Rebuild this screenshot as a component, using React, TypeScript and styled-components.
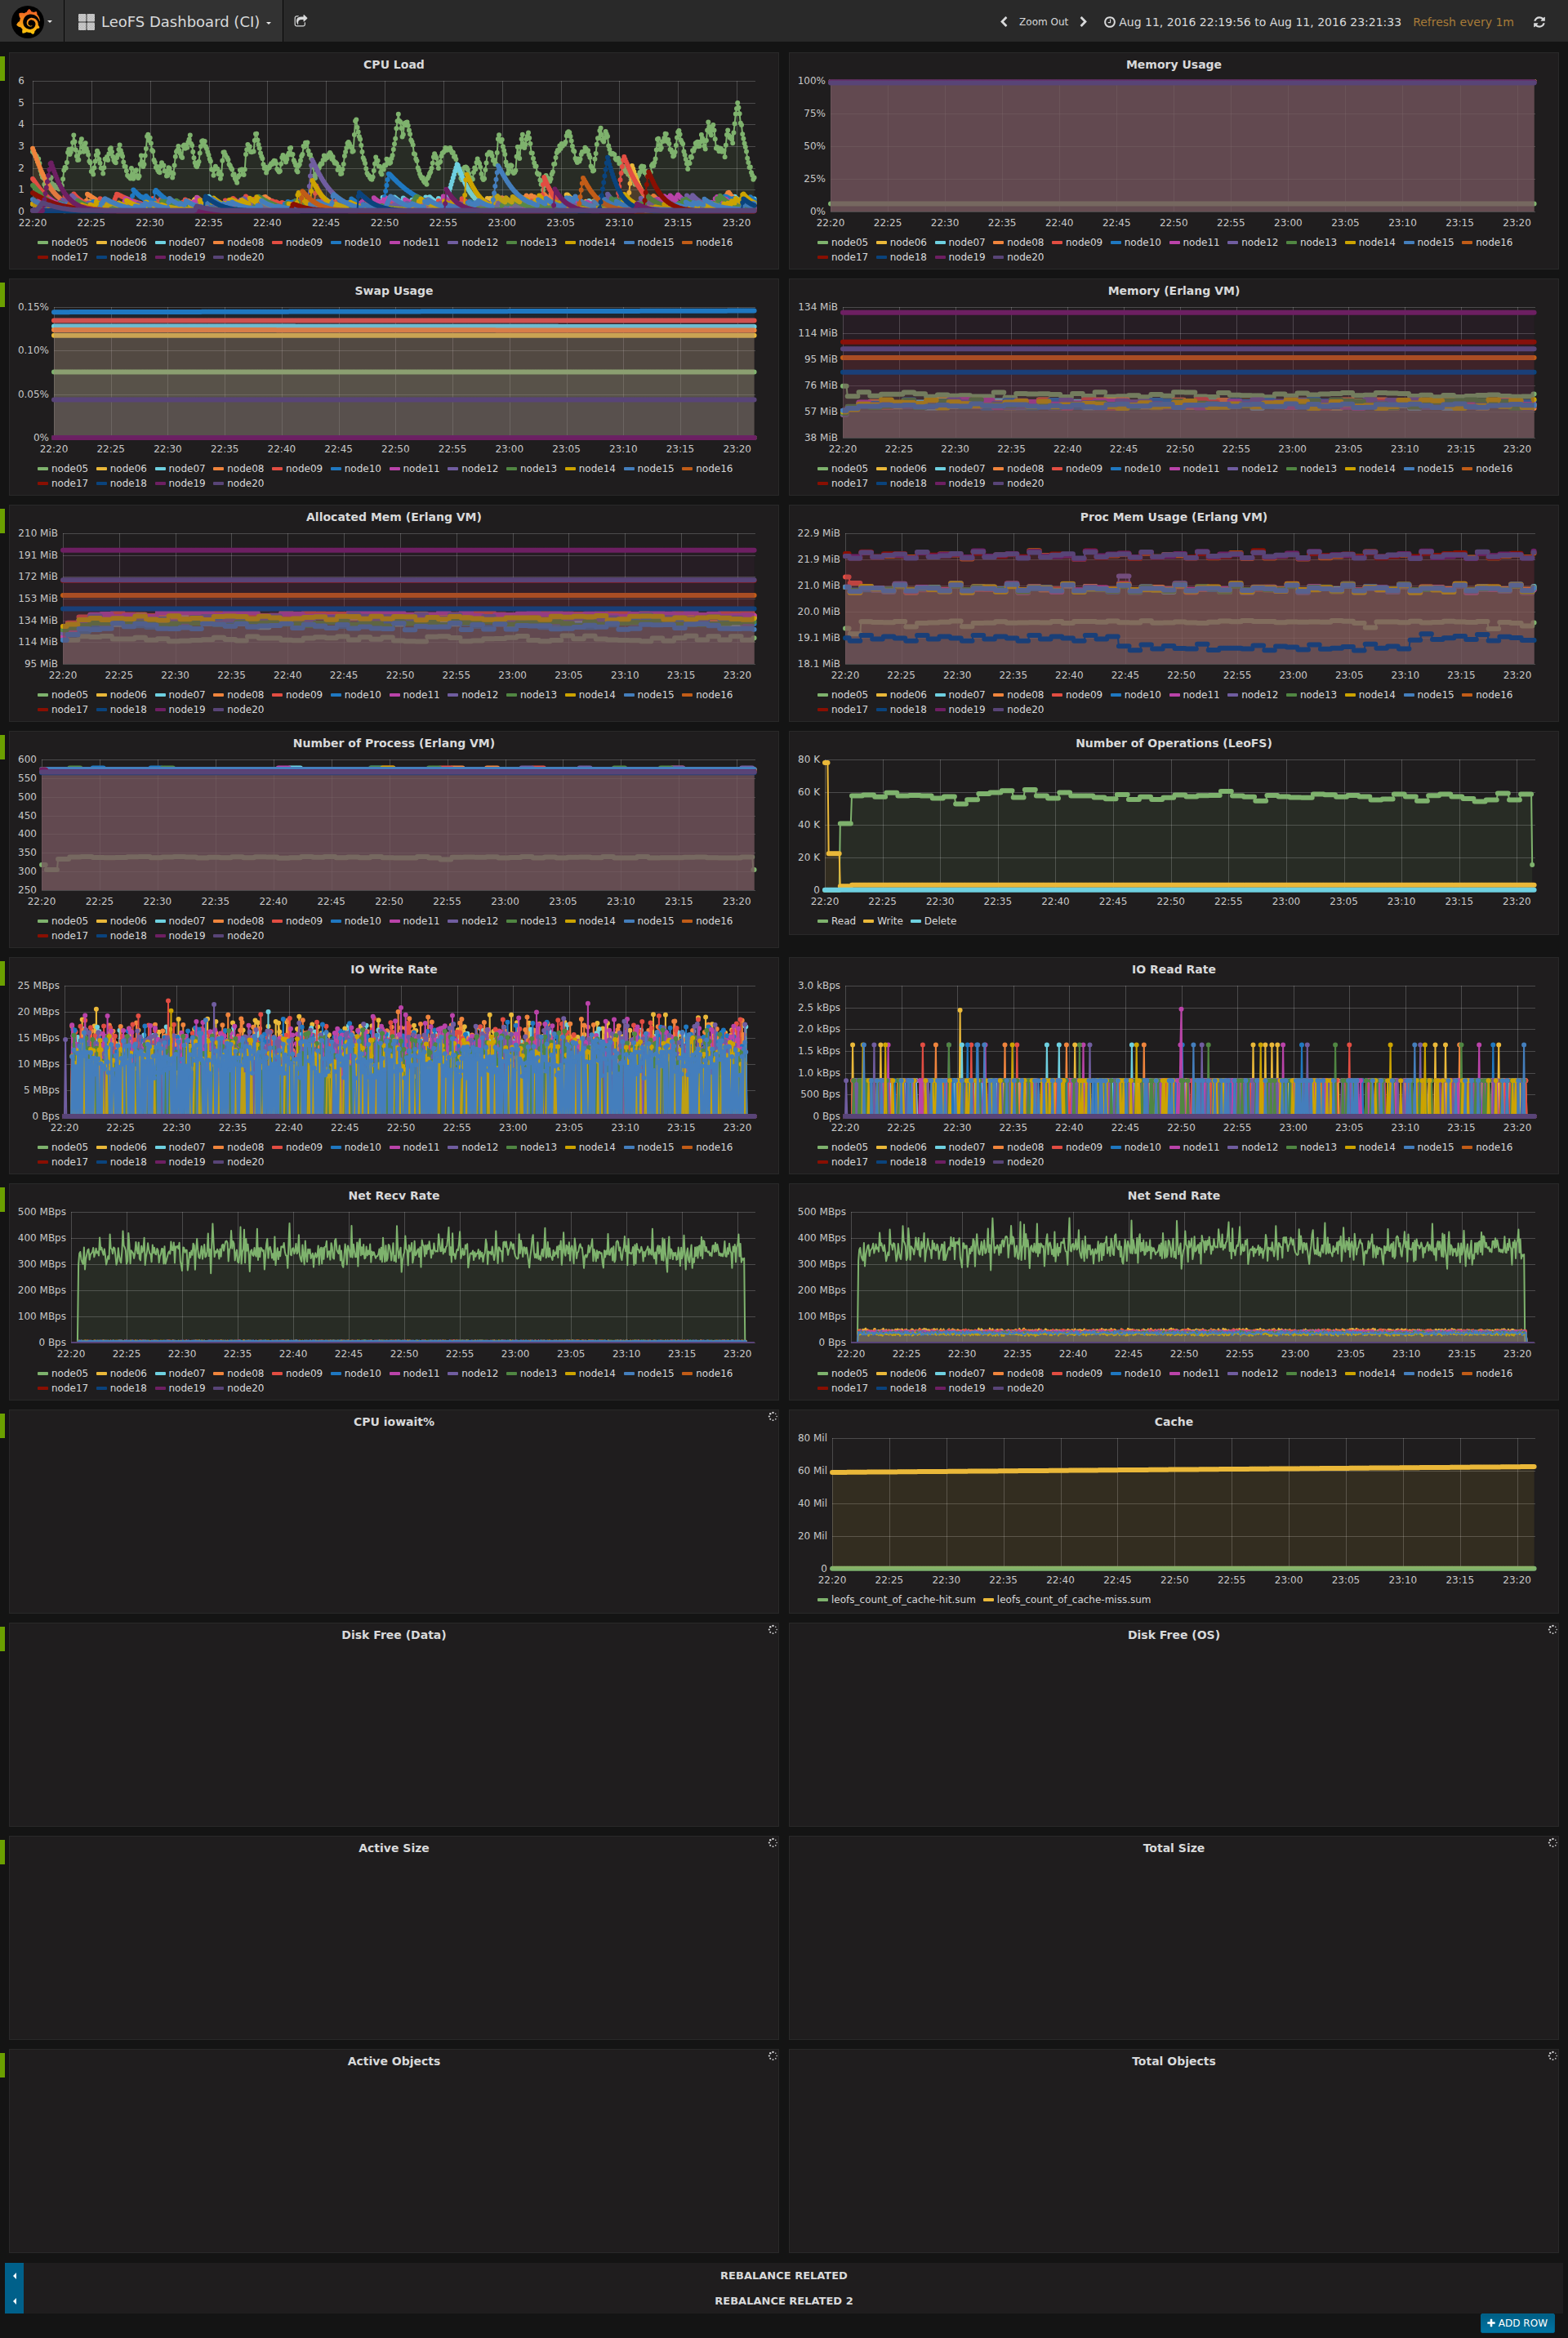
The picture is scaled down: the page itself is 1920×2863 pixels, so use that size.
import React, { useLayoutEffect, useMemo, useRef, useState } from "react";
import styled, { createGlobalStyle } from "styled-components";
import { SiGrafana } from "react-icons/si";

/* ---------- series data ---------- */

type Point = [number, number];
type Anchor = [number, number];
interface Series {
  name: string;
  color: string;
  points: Point[];
}
interface ChartSpec {
  left: number;
  labelGap?: number;
  min: number;
  max: number;
  ticks: string[];
  series: Series[];
  dots?: number;
}

const SPAN = 61.6;
const STEP = 1 / 12;
const PALETTE = [
  "#7eb26d", "#eab839", "#6ed0e0", "#ef843c", "#e24d42", "#1f78c1", "#ba43a9", "#705da0",
  "#508642", "#cca300", "#447ebc", "#c15c17", "#890f02", "#0a437c", "#6d1f62", "#584477",
];
const NODES = PALETTE.map((_, i) => "node" + String(i + 5).padStart(2, "0"));

function random(seed: number) {
  let s = seed >>> 0;
  return () => {
    s = (s + 0x6d2b79f5) | 0;
    let t = Math.imul(s ^ (s >>> 15), 1 | s);
    t = (t + Math.imul(t ^ (t >>> 7), 61 | t)) ^ t;
    return ((t ^ (t >>> 14)) >>> 0) / 4294967296;
  };
}

function sample(step: number, fn: (t: number, i: number) => number, end = SPAN - 0.1): Point[] {
  const out: Point[] = [];
  for (let i = 0; i * step <= end; i++) out.push([i * step, fn(i * step, i)]);
  return out;
}

function nodes(fn: (n: number) => Point[]): Series[] {
  return NODES.map((name, i) => ({ name, color: PALETTE[i], points: fn(i + 5) }));
}

function interpolate(anchors: Anchor[], t: number) {
  for (let i = 1; i < anchors.length; i++) {
    if (t <= anchors[i][0]) {
      const [a, va] = anchors[i - 1];
      const [b, vb] = anchors[i];
      return va + ((vb - va) * (t - a)) / (b - a || 1);
    }
  }
  return anchors[anchors.length - 1][1];
}

/* one value per minute, held for every sample within it */
function held(first: number, boundary: number, value: (k: number) => number): Point[] {
  return sample(STEP, (t) => (t < boundary ? first : value(Math.floor(t - boundary))));
}

/* CPU load: [pixel, height] anchors of node05 in two runs */
const LOAD_A: Anchor[] = [
  [121, 555], [140, 585], [165, 680], [185, 650], [207, 695], [228, 675], [237, 605], [243, 618], [251, 545],
  [262, 565], [269, 494], [287, 590], [298, 508], [307, 550], [315, 530], [338, 630], [345, 630], [357, 555],
  [380, 635], [388, 575], [397, 582], [406, 536], [420, 605], [440, 536], [455, 595], [478, 660], [482, 620],
  [490, 660], [500, 625], [511, 658], [517, 570], [527, 618], [542, 488], [555, 525], [565, 580], [582, 640],
  [596, 597], [614, 648], [621, 607], [636, 650], [645, 570], [653, 535], [668, 585], [675, 525], [686, 545],
  [697, 494], [710, 560], [725, 625], [740, 522], [752, 525], [765, 570], [786, 640], [790, 595], [812, 652],
  [819, 557], [835, 580], [870, 662], [885, 620], [897, 648], [902, 580], [910, 530], [930, 558], [941, 481],
  [955, 555], [978, 625], [1010, 583], [1027, 645], [1035, 567], [1050, 592], [1066, 536], [1092, 628],
  [1115, 543], [1128, 521], [1158, 648], [1175, 600], [1190, 580], [1214, 567], [1254, 637], [1278, 512],
  [1297, 560], [1307, 427], [1320, 495], [1345, 625], [1369, 660], [1380, 575], [1402, 630], [1420, 590],
];
const LOAD_B: Anchor[] = [
  [0, 440], [12, 325], [18, 270], [30, 355], [35, 297], [43, 305], [58, 390], [75, 475], [95, 525], [105, 480],
  [118, 408], [128, 467], [140, 405], [155, 395], [168, 405], [190, 510], [200, 460], [220, 510], [235, 432],
  [252, 512], [262, 420], [270, 412], [285, 455], [292, 350], [302, 365], [318, 485], [325, 455], [338, 490],
  [345, 395], [350, 440], [357, 338], [363, 400], [373, 332], [385, 420], [415, 540], [423, 488], [433, 520],
  [455, 400], [475, 370], [484, 325], [508, 445], [534, 388], [553, 485], [562, 370], [574, 320], [580, 370],
  [587, 325], [600, 410], [625, 440], [670, 525], [685, 455], [705, 495], [715, 450], [722, 445], [729, 345],
  [738, 395], [750, 337], [775, 432], [786, 317], [812, 462], [835, 365], [843, 395], [850, 337], [860, 395],
  [868, 300], [875, 345], [882, 303], [890, 390], [914, 415], [920, 325], [935, 370], [948, 218], [960, 320],
  [975, 430], [993, 510],
];
const LOAD: Anchor[] = [
  ...LOAD_A.map(([x, y]): Anchor => [(x / 3 - 40) / 14.37, (774 - y) / 79.8]),
  ...LOAD_B.map(([x, y]): Anchor => [(440 + x * 0.4464) / 14.37, (625 - y) / 80]),
];

/* [start px, peak, rise px, decay px] bursts per node */
const BURSTS: Record<number, [number, number, number, number][]> = {
  6: [[728, 2.1, 6, 12], [86, 0.4, 6, 20], [650, 0.8, 4, 14]],
  7: [[503, 2.2, 17, 14], [212, 0.7, 3, 14]],
  8: [[-1, 2.9, 1, 18], [64, 0.8, 3, 20], [280, 0.7, 4, 16], [840, 0.9, 12, 12]],
  9: [[-1, 1.5, 1, 18], [344, 1.2, 3, 10], [622, 1.6, 4, 12], [714, 2.55, 10, 18], [95, 0.8, 8, 30]],
  10: [[428, 1.75, 8, 30], [120, 1.0, 3, 18], [147, 1.0, 3, 18], [836, 0.7, 12, 25]],
  11: [[108, 0.6, 6, 20], [842, 0.6, 6, 12]],
  12: [[336, 2.4, 6, 20], [250, 0.6, 8, 18], [700, 0.8, 4, 10]],
  13: [[-1, 1.2, 1, 18], [270, 0.7, 6, 20], [460, 0.7, 10, 20]],
  14: [[340, 1.45, 2, 14], [322, 0.9, 3, 10], [528, 1.75, 3, 14], [240, 0.55, 3, 20], [720, 0.8, 4, 14]],
  15: [[562, 2.1, 8, 20], [365, 0.8, 3, 18], [430, 0.7, 8, 18], [80, 0.6, 8, 20]],
  16: [[668, 1.55, 6, 15], [328, 0.95, 2, 15], [40, 0.4, 6, 20]],
  17: [[-1, 0.85, 1, 26], [748, 1.85, 6, 14], [316, 0.35, 3, 16]],
  18: [[210, 0.72, 1, 16], [398, 0.9, 1, 16], [694, 2.5, 10, 12], [868, 0.6, 2, 14]],
  19: [[12, 2.3, 10, 14], [505, 1.05, 1, 12], [638, 1.05, 1, 12], [738, 0.35, 2, 12]],
  20: [[4, 0.4, 8, 20], [198, 0.25, 3, 16]],
};

function loadOf(n: number): Point[] {
  const rnd = random(n * 97);
  let level = n < 16 ? 0.3 : 0.02;
  return sample(STEP, (t) => {
    const px = t * 14.37;
    if (n === 5) return interpolate(LOAD, t) + (rnd() - 0.5) * 0.26;
    level *= 0.93;
    if (n < 16 && rnd() < 0.08) level += 0.05 + rnd() * 0.24;
    let v = level + (n < 16 ? 0.07 : 0.03);
    for (const [start, peak, rise, decay] of BURSTS[n] || []) {
      if (px < start) continue;
      const d = px - start;
      const b = d < rise ? (peak * d) / rise : peak * Math.exp(-Math.pow((d - rise) / decay, 1.1) * 0.8);
      v = Math.max(v, b);
    }
    return n === 20 ? Math.max(0.05, v) : v;
  });
}

const CPU: ChartSpec = { left: 29, labelGap: 10, min: 0, max: 6, ticks: ["0", "1", "2", "3", "4", "5", "6"], series: nodes(loadOf) };

const MEMORY: ChartSpec = {
  left: 51, min: 0, max: 100, ticks: ["0%", "25%", "50%", "75%", "100%"],
  series: nodes((n) => {
    const rnd = random(n);
    if (n === 5) return sample(STEP, () => 6);
    if (n === 20) return sample(STEP, () => 98.5);
    return sample(STEP, () => 99.1 + (n < 16 ? rnd() * 0.3 : 0));
  }),
};

const SWAP_LEVEL: Record<number, [number, number]> = {
  5: [0.0755, 0.0755], 6: [0.1175, 0.1175], 7: [0.128, 0.1275], 8: [0.1238, 0.1232], 9: [0.1345, 0.1345],
  10: [0.1442, 0.1457], 20: [0.0435, 0.0435],
};
const SWAP: ChartSpec = {
  left: 55, min: 0, max: 0.15, ticks: ["0%", "0.05%", "0.10%", "0.15%"],
  series: nodes((n) => {
    const [a, b] = SWAP_LEVEL[n] || [0, 0];
    return sample(STEP, (t) => a + ((b - a) * t) / SPAN);
  }),
};

function wander(n: number, base: number, spread: number, start: number, ramp: number, salt: number): Point[] {
  const rnd = random(n * 31 + salt);
  const values = Array.from({ length: 64 }, (_, k) => {
    const target = base + (rnd() - 0.5) * spread;
    return k < ramp ? start + ((target - start) * (k + 1)) / (ramp + 1) : target;
  });
  return held(start, 0.4, (k) => values[k]);
}

const ERLANG: ChartSpec = {
  left: 66, min: 38, max: 134, ticks: ["38 MiB", "57 MiB", "76 MiB", "95 MiB", "114 MiB", "134 MiB"],
  series: nodes((n) => {
    const flat: Record<number, number> = { 16: 96.8, 17: 108.4, 18: 86.2, 19: 129.9, 20: 103.2 };
    if (flat[n]) return sample(STEP, () => flat[n]);
    if (n === 5) return wander(5, 69.5, 4, 76, 0, 9);
    return wander(n, n === 15 ? 61.5 : 62.8, n === 15 ? 3 : 6.5, 55 + (n % 4), 1, 4);
  }),
};

const ALLOC_BASE: Record<number, [number, number]> = {
  6: [134, 8], 7: [132, 10], 8: [136, 8], 9: [139, 4], 10: [131, 8], 11: [138.5, 4], 12: [134, 9], 13: [130.5, 4],
  14: [135.5, 4], 15: [128, 6],
};
const ALLOCATED: ChartSpec = {
  left: 66, min: 95, max: 210, ticks: ["95 MiB", "114 MiB", "134 MiB", "153 MiB", "172 MiB", "191 MiB", "210 MiB"],
  series: nodes((n) => {
    const flat: Record<number, number> = { 16: 155.3, 17: 168.3, 18: 143.5, 19: 195.1, 20: 168.9 };
    if (flat[n]) return sample(STEP, () => flat[n]);
    if (n === 5) return wander(5, 117.3, 5, 119, 0, 2);
    const [base, spread] = ALLOC_BASE[n];
    return wander(n, base, spread, 116 + (n % 5) * 3, 2, 6);
  }),
};

const procValue = (y: number) => 18.1 + ((1325 - y) / 448) * 4.8;
const HIGH = [962, 942, 957, 952, 949];
const MID = [1075, 1065, 1066, 1073, 1054];
const LOW_A = [1246, 1227, 1240, 1231, 1237];
const LOW_B = [
  1264, 1278, 1259, 1273, 1263, 1272, 1273, 1257, 1277, 1271, 1271, 1273, 1262, 1278, 1265, 1268, 1276, 1259, 1274,
  1271, 1266, 1279, 1257, 1271, 1265, 1273, 1243, 1222, 1241, 1236, 1230, 1241, 1224, 1245, 1232, 1235, 1244, 1244,
];
const PROC: ChartSpec = {
  left: 69, min: 18.1, max: 22.9, ticks: ["18.1 MiB", "19.1 MiB", "20.0 MiB", "21.0 MiB", "21.9 MiB", "22.9 MiB"],
  series: nodes((n) => {
    const rnd = random(n * 13);
    const noise = Array.from({ length: 64 }, () => (rnd() - 0.5) * 12);
    if (n === 5) {
      const dips: Record<number, number> = { 0: 1222, 5: 1198, 10: 1197, 46: 1200, 57: 1205, 60: 1195 };
      return held(procValue(1203), 0.4, (k) => procValue(dips[k] || 1181 + noise[k] * 0.7));
    }
    if (n === 18) return held(procValue(1236), 0.4, (k) => procValue(k < 24 ? LOW_A[k % 5] : LOW_B[k - 24]));
    if (n > 15) return held(procValue(n === 17 ? 947 : 955), 0.4, (k) => procValue(HIGH[k % 5] + noise[k] * (n === 20 ? 0.3 : 0.9)));
    if (n === 9) return held(procValue(1027), 0.4, (k) => procValue(k === 0 ? 1048 : MID[k % 5] + noise[k]));
    if (n === 12) return held(procValue(1060), 0.4, (k) => procValue(k === 24 ? 1024 : MID[k % 5] + noise[k]));
    return held(procValue(1062), 0.4, (k) => procValue(MID[k % 5] + noise[k] * (n === 15 ? 0.3 : 1)));
  }),
};

const PROCESSES: ChartSpec = {
  left: 40, min: 250, max: 600, ticks: ["250", "300", "350", "400", "450", "500", "550", "600"],
  series: nodes((n) => {
    const rnd = random(n * 7);
    const noise = Array.from({ length: 64 }, () => rnd());
    if (n === 5) return held(318, 0.4, (k) => (k === 0 ? 305 : k === 1 ? 333 : k > 60 ? 305 : k === 34 ? 332 : 336 + noise[k] * 4));
    if (n === 15) return sample(STEP, () => 574);
    if (n === 20) return sample(STEP, () => 566);
    if (n === 18) return sample(STEP, () => 564.5);
    return held(572, 0.4, (k) => (n < 15 ? 571 + (noise[k] > 0.96 ? 6 : noise[k] * 2) : 567));
  }),
};

const READ_Y = [
  333, 238, 235, 241, 227, 238, 236, 238, 246, 240, 266, 251, 231, 226, 220, 243, 217, 238, 246, 226, 238, 238, 243,
  248, 233, 250, 241, 250, 244, 235, 240, 237, 236, 222, 238, 241, 255, 236, 240, 243, 244, 232, 234, 241, 236, 240,
  252, 249, 232, 240, 255, 237, 232, 240, 247, 257, 252, 229, 252, 232,
];
const OPERATIONS: ChartSpec = {
  left: 44, min: 0, max: 80, ticks: ["0", "20 K", "40 K", "60 K", "80 K"],
  series: [
    {
      name: "Read", color: PALETTE[0],
      points: sample(STEP, (t) => {
        const k = Math.floor(t - 1.3);
        return k < 0 ? 0 : k >= READ_Y.length ? 15.5 : ((561 - READ_Y[k]) / 448) * 80;
      }, SPAN - 0.25),
    },
    { name: "Write", color: PALETTE[1], points: sample(STEP, (t) => (t < 0.3 ? 78 : t < 1.3 ? 22.4 : t < 2.3 ? 2.4 : 3.1)) },
    { name: "Delete", color: PALETTE[2], points: sample(STEP, () => 0.1) },
  ],
};

const WRITE_PEAKS: Record<number, Anchor[]> = {
  6: [[193, 20.5], [358, 18.6], [599, 19.1], [980, 19.4], [1023, 19.4], [1307, 19.5], [1331, 19.4], [1412, 19]],
  7: [[536, 20]],
  8: [[456, 19.4], [796, 20], [856, 19], [924, 18.6], [1054, 19], [1163, 18.6]],
  9: [[277, 19.2], [336, 22.1], [521, 19.5], [1317, 19.2], [1481, 18.5]],
  10: [[566, 18.6], [1016, 18]],
  11: [[171, 19.3], [215, 19.2], [746, 19.1], [802, 20.8], [811, 19.4], [905, 19.3], [1073, 19.9], [1176, 21.6], [1228, 18.5]],
  12: [[429, 21.4], [1128, 18.7], [1490, 17.6]],
  14: [[343, 20.2]],
  15: [[411, 18.4]],
};
const WRITE_TOP: Record<number, number> = { 6: 14.6, 7: 13.2, 8: 14.4, 9: 14.4, 10: 13.6, 11: 14.4, 12: 13.8, 13: 12.2, 14: 11.2, 15: 11.6 };

function spikes(n: number, x0: number, chance: number, pair: number, value: (r: number) => number, peaks: Anchor[]): Point[] {
  const rnd = random(n * 211 + Math.round(x0));
  const fixed = new Map(peaks.map(([x, v]): [number, number] => [Math.round((x - x0) / 22.42 / STEP), v]));
  let on = false;
  return sample(STEP, (t, i) => {
    if (n === 12 && i === 1) return value(0.6);
    if (t < 0.6 || t > SPAN - 0.85 || n === 5 || n > 15) return 0;
    if (fixed.has(i)) return fixed.get(i)!;
    if (fixed.has(i - 1) || fixed.has(i + 1)) return 0;
    if (on) {
      on = false;
      return rnd() < pair ? value(rnd()) : 0;
    }
    if (rnd() < chance) {
      on = true;
      return value((rnd() + rnd()) / 2);
    }
    return 0;
  });
}

const IO_WRITE: ChartSpec = {
  left: 68, min: 0, max: 25, ticks: ["0 Bps", "5 MBps", "10 MBps", "15 MBps", "20 MBps", "25 MBps"],
  series: nodes((n) => spikes(n, 129.5, n === 15 ? 0.92 : n === 14 ? 0.45 : 0.38, n === 15 ? 0.3 : 0.2, (r) => WRITE_TOP[n] - 4.5 + r * 9, WRITE_PEAKS[n] || [])),
};

const READ_PEAKS: Record<number, number[]> = {
  6: [138, 194, 583, 939, 963, 977, 988, 1303, 1325, 1430],
  7: [357, 526, 550, 697],
  8: [305, 443, 565, 721, 1352],
  9: [279, 375, 467, 1132],
  10: [367, 386, 798, 1037, 1420],
  11: [209, 403, 600, 793, 1000, 1392],
  12: [181, 330, 612, 836, 1047, 1274],
  13: [331, 592, 850, 1104, 1356],
  14: [158, 204, 458, 706, 955, 1214, 1283],
  15: [161, 388, 401, 819, 1262, 1481],
};
const IO_READ: ChartSpec = {
  left: 69, min: 0, max: 3, ticks: ["0 Bps", "500 Bps", "1.0 kBps", "1.5 kBps", "2.0 kBps", "2.5 kBps", "3.0 kBps"],
  series: nodes((n) => {
    const peaks = (READ_PEAKS[n] || []).map((x): Anchor => [x, 1.64]);
    if (n === 6) peaks.push([353, 2.44]);
    if (n === 11) peaks.push([796, 2.46]);
    return spikes(n, 123, n > 13 ? 0.13 : 0.17, 0, () => 0.82, peaks);
  }),
};

const NET_PEAKS: Anchor[] = [
  [171, 280], [200, 402], [221, 414], [247, 427], [258, 419], [290, 297], [365, 275], [376, 277], [391, 279],
  [417, 417], [423, 265], [425, 455], [462, 428], [482, 442], [488, 432], [500, 272], [514, 435], [530, 280],
  [550, 405], [576, 285], [579, 456], [598, 412], [687, 288], [703, 447], [717, 292], [795, 446], [804, 270],
  [811, 408], [877, 415], [898, 441], [906, 418], [920, 424], [936, 287], [992, 427], [1038, 415], [1060, 287],
  [1067, 412], [1090, 438], [1127, 421], [1168, 285], [1207, 286], [1216, 416], [1250, 406], [1305, 435],
  [1335, 270], [1338, 405], [1368, 410], [1372, 280], [1385, 285], [1404, 404], [1464, 285], [1478, 414],
];
function traffic(scale: number): Point[] {
  const rnd = random(77);
  const fixed = new Map(NET_PEAKS.map(([x, v]): [number, number] => [Math.round(((x - 142.5) / 22.22) * 12), v]));
  return sample(STEP, (t, i) => {
    const v = 345 + (rnd() + rnd() - 1) * 58;
    if (t < 0.6 || t > SPAN - 0.95) return 0;
    return (fixed.get(i) || v) * scale;
  });
}
function background(n: number, base: number, spread: number): Point[] {
  const rnd = random(n * 5);
  return sample(STEP, (t) => {
    const v = base + (rnd() + rnd() - 1) * spread;
    return n > 15 || t < 0.6 || t > SPAN - 0.85 ? 0 : v;
  });
}
const NET_TICKS = ["0 Bps", "100 MBps", "200 MBps", "300 MBps", "400 MBps", "500 MBps"];
const NET_RECV: ChartSpec = {
  left: 76, min: 0, max: 500, ticks: NET_TICKS, dots: 0,
  series: nodes((n) => (n === 5 ? traffic(1) : background(n, 6, n === 15 ? 1 : 2))),
};
const SEND_BASE: Record<number, number> = { 6: 47, 7: 40, 8: 43, 9: 44, 10: 39, 11: 41, 12: 39, 13: 36, 14: 32, 15: 36 };
const NET_SEND: ChartSpec = {
  left: 76, min: 0, max: 500, ticks: NET_TICKS, dots: 0,
  series: nodes((n) => (n === 5 ? traffic(1.045) : background(n, SEND_BASE[n] || 0, 8))),
};

const CACHE: ChartSpec = {
  left: 53, min: 0, max: 80, ticks: ["0", "20 Mil", "40 Mil", "60 Mil", "80 Mil"],
  series: [
    { name: "leofs_count_of_cache-hit.sum", color: PALETTE[0], points: sample(STEP, () => 0.1) },
    { name: "leofs_count_of_cache-miss.sum", color: PALETTE[1], points: sample(STEP, (t) => 59 + (3.5 * t) / SPAN) },
  ],
};

/* ---------- page styles ---------- */

const GlobalStyle = createGlobalStyle`
  *, *::before, *::after { box-sizing: border-box; }
  body {
    margin: 0;
    background: #141414;
    color: #d8d9da;
    font-family: "DejaVu Sans", Verdana, sans-serif;
    font-size: 12px;
  }
  button { font: inherit; color: inherit; border: 0; padding: 0; background: none; cursor: pointer; }
  h2 { margin: 0; }
`;

const Navbar = styled.header`
  display: flex;
  height: 51px;
  background: #292929;
`;
const NavButton = styled.button<{ $left: number; $right: number; $gap: number }>`
  display: flex;
  align-items: center;
  gap: ${(p) => p.$gap}px;
  padding: 2px ${(p) => p.$right}px 0 ${(p) => p.$left}px;
  background: #323232;
  border-right: 1px solid #080808;
`;
const LogoDisc = styled.span`
  display: grid;
  place-items: center;
  width: 40px;
  height: 40px;
  border-radius: 50%;
  background: #000;
`;
const GradientDefs = styled.svg`
  position: absolute;
  width: 0;
  height: 0;
`;
const DashboardTitle = styled.span`
  font-size: 18px;
  line-height: 24px;
`;
const Caret = styled.span<{ $drop?: number }>`
  width: 6px;
  height: 3px;
  margin-top: ${(p) => p.$drop || 0}px;
  border: 3px solid transparent;
  border-top-color: #e8e8e8;
  border-bottom: 0;
`;
const IconButton = styled.button`
  display: flex;
  align-items: center;
`;
const ShareButton = styled(IconButton)`
  padding: 1px 12px 0 13px;
`;
const TimeControls = styled.nav`
  display: flex;
  align-items: center;
  gap: 12px;
  margin-left: auto;
  padding: 2px 27px 0 0;
  font-size: 12px;
`;
const TimeRange = styled.button`
  display: flex;
  align-items: center;
  gap: 3px;
  margin-left: 5px;
  font-size: 14px;
`;
const RefreshRate = styled.span`
  margin-left: 11px;
  color: #a87b38;
`;
const RefreshButton = styled(IconButton)`
  margin-left: 11px;
`;

const Rows = styled.main`
  display: flex;
  flex-direction: column;
  gap: 11px;
  padding-top: 13px;
`;
const Row = styled.section`
  display: flex;
  align-items: flex-start;
  gap: 5px;
  padding-right: 11px;
`;
const RowHandle = styled.button`
  flex: none;
  width: 6px;
  height: 30px;
  margin-top: 5px;
  background: #6ba000;
`;
const PanelGrid = styled.div`
  flex: 1;
  display: grid;
  grid-template-columns: repeat(2, minmax(0, 1fr));
  align-items: start;
  gap: 12px;
`;
const PanelBox = styled.article`
  position: relative;
  min-height: 250px;
  padding-bottom: 5px;
  background: #1f1d1e;
  border: 1px solid #292929;
`;
const PanelTitle = styled.h2`
  font-size: 14px;
  line-height: 28px;
  font-weight: bold;
  text-align: center;
`;
const Loading = styled.span`
  position: absolute;
  top: 1px;
  right: 0;
  display: flex;
`;
const ChartFrame = styled.div`
  height: 195px;
`;
const ChartSvg = styled.svg`
  display: block;
  width: 100%;
  height: 195px;
  font-size: 12px;
  fill: #c8c8c8;
`;
const Legend = styled.ul<{ $grid: boolean }>`
  display: ${(p) => (p.$grid ? "grid" : "flex")};
  grid-template-columns: repeat(12, minmax(0, 1fr));
  column-gap: ${(p) => (p.$grid ? 0 : 9)}px;
  margin: 0;
  padding: 0 46px 0 34px;
  list-style: none;
`;
const LegendButton = styled.button<{ $off: boolean }>`
  display: flex;
  align-items: center;
  gap: 4px;
  line-height: 18px;
  white-space: nowrap;
  opacity: ${(p) => (p.$off ? 0.4 : 1)};
`;
const Swatch = styled.span<{ $color: string }>`
  flex: none;
  width: 13px;
  height: 4px;
  border-radius: 1px;
  background: ${(p) => p.$color};
`;

const CollapsedRows = styled.section`
  padding: 12px 6px 0;
`;
const CollapsedRow = styled.div`
  display: flex;
  height: 31px;
  background: #1f1d1e;
`;
const ExpandButton = styled.button`
  display: grid;
  place-items: center;
  width: 23px;
  background: #00608a;
`;
const LeftCaret = styled.span`
  border: 4px solid transparent;
  border-right-color: #fff;
  border-left: 0;
`;
const CollapsedTitle = styled.h2`
  flex: 1;
  padding-right: 23px;
  font-size: 13px;
  line-height: 31px;
  text-align: center;
`;
const Footer = styled.footer`
  display: flex;
  justify-content: flex-end;
  padding: 0 16px 6px;
`;
const AddRow = styled.button`
  display: flex;
  align-items: center;
  gap: 3px;
  height: 24px;
  padding: 0 8px 0 6px;
  color: #fff;
  font-size: 12px;
  background: linear-gradient(#005f85, #0074a3);
  border: 1px solid #00628c;
  border-radius: 2px;
`;

/* ---------- icons ---------- */

const GLYPHS = {
  left: "M1427 301l-531 531 531 531q19 19 19 45t-19 45l-166 166q-19 19-45 19t-45-19l-742-742q-19-19-19-45t19-45l742-742q19-19 45-19t45 19l166 166q19 19 19 45t-19 45z",
  right: "M1363 877l-742 742q-19 19-45 19t-45-19l-166-166q-19-19-19-45t19-45l531-531-531-531q-19-19-19-45t19-45l166-166q19-19 45-19t45 19l742 742q19 19 19 45t-19 45z",
  clock: "M1024 544v448q0 14-9 23t-23 9h-320q-14 0-23-9t-9-23v-64q0-14 9-23t23-9h224v-352q0-14 9-23t23-9h64q14 0 23 9t9 23zm416 352q0-148-73-273t-198-198-273-73-273 73-198 198-73 273 73 273 198 198 273 73 273-73 198-198 73-273zm224 0q0 209-103 385.5t-279.5 279.5-385.5 103-385.5-103-279.5-279.5-103-385.5 103-385.5 279.5-279.5 385.5-103 385.5 103 279.5 279.5 103 385.5z",
  refresh: "M1639 1056q0 5-1 7-64 268-268 434.5t-478 166.5q-146 0-282.5-55t-243.5-157l-129 129q-19 19-45 19t-45-19-19-45v-448q0-26 19-45t45-19h448q26 0 45 19t19 45-19 45l-137 137q71 66 161 102t187 36q134 0 250-65t186-179q11-17 53-117 8-23 30-23h192q13 0 22.5 9.5t9.5 22.5zm25-800v448q0 26-19 45t-45 19h-448q-26 0-45-19t-19-45 19-45l138-138q-148-137-349-137-134 0-250 65t-186 179q-11 17-53 117-8 23-30 23h-199q-13 0-22.5-9.5t-9.5-22.5v-7q65-268 270-434.5t480-166.5q146 0 284 55.5t245 156.5l130-129q19-19 45-19t45 19 19 45z",
  share: "M1472 989v259q0 119-84.5 203.5t-203.5 84.5h-832q-119 0-203.5-84.5t-84.5-203.5v-832q0-119 84.5-203.5t203.5-84.5h255q13 0 22.5 9.5t9.5 22.5q0 27-26 32-77 26-133 60-10 4-16 4h-112q-66 0-113 47t-47 113v832q0 66 47 113t113 47h832q66 0 113-47t47-113v-214q0-19 18-28 28-13 54-37 16-16 35-8 21 9 21 29zm237-496l-384 384q-18 19-45 19-12 0-25-5-39-17-39-59v-192h-160q-323 0-438 131-119 137-74 473 3 23-20 34-8 2-12 2-16 0-26-13-10-14-21-31t-39.5-68.5-49.5-99.5-38.5-114-17.5-122q0-49 3.5-91t14-90 28-88 47-81.5 68.5-74 94.5-61.5 124.5-48.5 159.5-30.5 196.5-11h160v-192q0-42 39-59 13-5 25-5 26 0 45 19l384 384q19 19 19 45t-19 45z",
  plus: "M1600 736v192q0 40-28 68t-68 28h-416v416q0 40-28 68t-68 28h-192q-40 0-68-28t-28-68v-416h-416q-40 0-68-28t-28-68v-192q0-40 28-68t68-28h416v-416q0-40 28-68t68-28h192q40 0 68 28t28 68v416h416q40 0 68 28t28 68z",
};

function Glyph({ name, size }: { name: keyof typeof GLYPHS; size: number }) {
  return (
    <svg width={size} height={size} viewBox="0 0 1792 1792" fill="currentColor" aria-hidden="true">
      <path d={GLYPHS[name]} />
    </svg>
  );
}

function Spinner() {
  const radii = [1.3, 0.8, 0.8, 0.9, 1, 1.1, 1.2, 1.3];
  return (
    <svg width="13" height="13" viewBox="-7 -7 14 14" fill="#d8d9da" aria-hidden="true">
      {radii.map((r, i) => (
        <circle key={i} r={r} cx={5 * Math.sin((i * Math.PI) / 4)} cy={-5 * Math.cos((i * Math.PI) / 4)} />
      ))}
    </svg>
  );
}

function DashboardIcon() {
  return (
    <svg width="20" height="20" viewBox="0 0 20 20" aria-hidden="true">
      <defs>
        <pattern id="hatch" width="2" height="2" patternUnits="userSpaceOnUse">
          <rect width="2" height="2" fill="#a8a8a8" />
          <path d="M0 2L2 0" stroke="#dedede" strokeWidth="1" />
        </pattern>
      </defs>
      {[0, 10.5].map((x) => [0, 10.5].map((y) => <rect key={x + "-" + y} x={x} y={y} width="9.5" height="9.5" rx="1" fill="url(#hatch)" />))}
    </svg>
  );
}

function Logo() {
  return (
    <LogoDisc>
      <GradientDefs aria-hidden="true">
        <defs>
          <linearGradient id="flame" x1="0" y1="0" x2="0" y2="1">
            <stop offset="0" stopColor="#f05a28" />
            <stop offset="1" stopColor="#fbca0a" />
          </linearGradient>
        </defs>
      </GradientDefs>
      <SiGrafana size={31} fill="url(#flame)" />
    </LogoDisc>
  );
}

/* ---------- chart ---------- */

const TOP = 6;
const BOTTOM = 166;
const RIGHT_MARGIN = 29;

function Chart({ spec, title, hidden }: { spec: ChartSpec; title: string; hidden: Set<string> }) {
  const frame = useRef<HTMLDivElement>(null);
  const [width, setWidth] = useState(0);
  useLayoutEffect(() => {
    const el = frame.current!;
    const measure = () => setWidth(el.clientWidth);
    measure();
    const observer = new ResizeObserver(measure);
    observer.observe(el);
    return () => observer.disconnect();
  }, []);

  const left = spec.left - 1;
  const right = width - RIGHT_MARGIN + 1;
  const shapes = useMemo(() => {
    if (!width) return [];
    const x = (t: number) => left + (t / SPAN) * (right - left);
    const y = (v: number) => BOTTOM - ((v - spec.min) / (spec.max - spec.min)) * (BOTTOM - TOP);
    return spec.series.map((s) => {
      const pts = s.points.map(([t, v]) => x(t).toFixed(1) + " " + y(v).toFixed(1));
      const line = "M" + pts.join("L");
      const last = x(s.points[s.points.length - 1][0]).toFixed(1);
      return { line, area: `${line}L${last} ${BOTTOM}L${left} ${BOTTOM}Z`, dots: pts.map((p) => `M${p}h0`).join("") };
    });
  }, [width, spec, left, right]);

  const rows = spec.ticks.length - 1;
  const columns = Array.from({ length: 13 }, (_, i) => i);
  const dots = spec.dots === undefined ? 6 : spec.dots;
  return (
    <ChartFrame ref={frame}>
      {width > 0 && (
        <ChartSvg role="img" aria-label={title}>
          <g stroke="#fff" strokeOpacity="0.2" shapeRendering="crispEdges">
            {spec.ticks.map((_, i) => {
              const y = Math.round(BOTTOM - ((BOTTOM - TOP) * i) / rows);
              return <path key={i} d={`M${left} ${y}H${right}`} />;
            })}
            {columns.map((i) => {
              const x = Math.round(left + ((right - left) * i * 5) / SPAN);
              return <path key={i} d={`M${x} ${TOP}V${BOTTOM}`} />;
            })}
          </g>
          {spec.series.map((s, i) =>
            hidden.has(s.name) ? null : (
              <g key={s.name} stroke={s.color} fill="none" strokeLinejoin="round">
                <path d={shapes[i].area} fill={s.color} fillOpacity="0.1" stroke="none" />
                <path d={shapes[i].line} strokeWidth="2" />
                {dots > 0 && <path d={shapes[i].dots} strokeWidth={dots} strokeLinecap="round" />}
              </g>
            )
          )}
          {spec.ticks.map((label, i) => (
            <text key={label} x={left - (spec.labelGap || 6)} y={Math.round(BOTTOM - ((BOTTOM - TOP) * i) / rows) + 4} textAnchor="end">
              {label}
            </text>
          ))}
          {columns.map((i) => {
            const minutes = 20 + i * 5;
            const label = `${22 + Math.floor(minutes / 60)}:${String(minutes % 60).padStart(2, "0")}`;
            return (
              <text key={i} x={left + ((right - left) * i * 5) / SPAN} y={184} textAnchor="middle">
                {label}
              </text>
            );
          })}
        </ChartSvg>
      )}
    </ChartFrame>
  );
}

function Panel({ title, chart }: { title: string; chart?: ChartSpec }) {
  const [hidden, setHidden] = useState<Set<string>>(new Set());
  const toggle = (name: string) =>
    setHidden((current) => {
      const next = new Set(current);
      if (!next.delete(name)) next.add(name);
      return next;
    });
  return (
    <PanelBox>
      <PanelTitle>{title}</PanelTitle>
      {chart ? (
        <>
          <Chart spec={chart} title={title} hidden={hidden} />
          <Legend $grid={chart.series.length > 12}>
            {chart.series.map((s) => (
              <li key={s.name}>
                <LegendButton $off={hidden.has(s.name)} aria-pressed={!hidden.has(s.name)} onClick={() => toggle(s.name)}>
                  <Swatch $color={s.color} />
                  {s.name}
                </LegendButton>
              </li>
            ))}
          </Legend>
        </>
      ) : (
        <Loading>
          <Spinner />
        </Loading>
      )}
    </PanelBox>
  );
}

const ROWS: { title: string; chart?: ChartSpec }[][] = [
  [{ title: "CPU Load", chart: CPU }, { title: "Memory Usage", chart: MEMORY }],
  [{ title: "Swap Usage", chart: SWAP }, { title: "Memory (Erlang VM)", chart: ERLANG }],
  [{ title: "Allocated Mem (Erlang VM)", chart: ALLOCATED }, { title: "Proc Mem Usage (Erlang VM)", chart: PROC }],
  [{ title: "Number of Process (Erlang VM)", chart: PROCESSES }, { title: "Number of Operations (LeoFS)", chart: OPERATIONS }],
  [{ title: "IO Write Rate", chart: IO_WRITE }, { title: "IO Read Rate", chart: IO_READ }],
  [{ title: "Net Recv Rate", chart: NET_RECV }, { title: "Net Send Rate", chart: NET_SEND }],
  [{ title: "CPU iowait%" }, { title: "Cache", chart: CACHE }],
  [{ title: "Disk Free (Data)" }, { title: "Disk Free (OS)" }],
  [{ title: "Active Size" }, { title: "Total Size" }],
  [{ title: "Active Objects" }, { title: "Total Objects" }],
];

export default function App() {
  return (
    <>
      <GlobalStyle />
      <Navbar>
        <NavButton $left={14} $right={14} $gap={4} aria-label="Main menu">
          <Logo />
          <Caret />
        </NavButton>
        <NavButton $left={17} $right={14} $gap={8}>
          <DashboardIcon />
          <DashboardTitle>LeoFS Dashboard (CI)</DashboardTitle>
          <Caret $drop={4} />
        </NavButton>
        <ShareButton aria-label="Share dashboard">
          <Glyph name="share" size={17} />
        </ShareButton>
        <TimeControls>
          <IconButton aria-label="Shift time range back">
            <Glyph name="left" size={14} />
          </IconButton>
          <button>Zoom Out</button>
          <IconButton aria-label="Shift time range forward">
            <Glyph name="right" size={14} />
          </IconButton>
          <TimeRange>
            <Glyph name="clock" size={16} />
            Aug 11, 2016 22:19:56 to Aug 11, 2016 23:21:33
            <RefreshRate>Refresh every 1m</RefreshRate>
          </TimeRange>
          <RefreshButton aria-label="Refresh">
            <Glyph name="refresh" size={16} />
          </RefreshButton>
        </TimeControls>
      </Navbar>
      <Rows>
        {ROWS.map((row) => (
          <Row key={row[0].title}>
            <RowHandle aria-label="Row menu" />
            <PanelGrid>
              {row.map((panel) => (
                <Panel key={panel.title} {...panel} />
              ))}
            </PanelGrid>
          </Row>
        ))}
      </Rows>
      <CollapsedRows>
        {["REBALANCE RELATED", "REBALANCE RELATED 2"].map((title) => (
          <CollapsedRow key={title}>
            <ExpandButton aria-label={"Expand " + title}>
              <LeftCaret />
            </ExpandButton>
            <CollapsedTitle>{title}</CollapsedTitle>
          </CollapsedRow>
        ))}
      </CollapsedRows>
      <Footer>
        <AddRow>
          <Glyph name="plus" size={12} />
          ADD ROW
        </AddRow>
      </Footer>
    </>
  );
}
